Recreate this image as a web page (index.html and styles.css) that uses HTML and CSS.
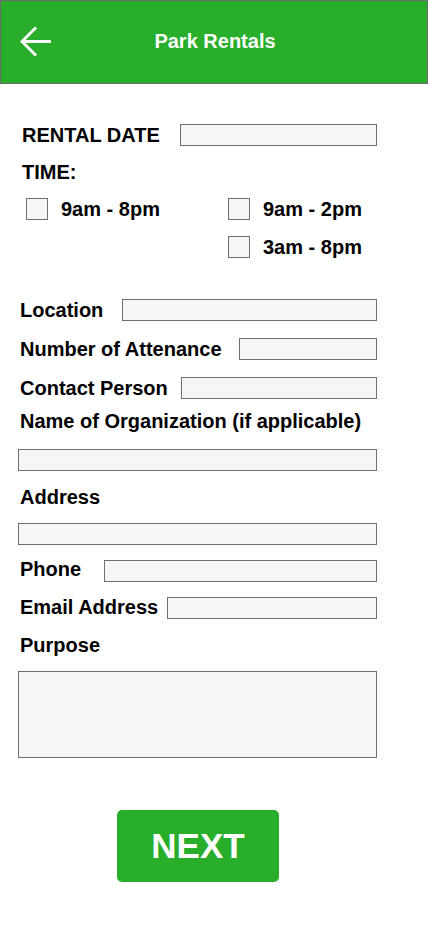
FILE: index.html
```html
<!DOCTYPE html>
<html lang="en">
<head>
<meta charset="utf-8">
<title>Park Rentals</title>
<link rel="stylesheet" href="styles.css">
</head>
<body>
<header class="topbar">
  <svg class="back" width="32" height="32" viewBox="0 0 32 32" aria-hidden="true">
    <path d="M16 1.5 L2 15.5 L16 29.5 M2 15.5 H31" fill="none" stroke="#fff" stroke-width="3" stroke-linejoin="miter"/>
  </svg>
  <h1 class="title">Park Rentals</h1>
</header>

<form class="form">
  <div class="row row-top">
    <span class="label label-caps">RENTAL DATE</span>
    <span class="field w-rental"></span>
  </div>
  <div class="row row-top">
    <span class="label label-caps">TIME:</span>
  </div>
  <div class="times">
    <label class="opt"><span class="box"></span>9am - 8pm</label>
    <label class="opt"><span class="box"></span>9am - 2pm</label>
    <label class="opt opt-right"><span class="box"></span>3am - 8pm</label>
  </div>

  <div class="row mt-location">
    <span class="label">Location</span>
    <span class="field w-location"></span>
  </div>
  <div class="row mt-2">
    <span class="label">Number of Attenance</span>
    <span class="field w-number"></span>
  </div>
  <div class="row mt-2">
    <span class="label">Contact Person</span>
    <span class="field w-contact"></span>
  </div>
  <div class="row mt-org">
    <span class="label">Name of Organization (if applicable)</span>
  </div>
  <div class="row mt-2">
    <span class="field w-full"></span>
  </div>
  <div class="row">
    <span class="label">Address</span>
  </div>
  <div class="row">
    <span class="field w-full"></span>
  </div>
  <div class="row">
    <span class="label lift-2">Phone</span>
    <span class="field w-phone"></span>
  </div>
  <div class="row">
    <span class="label lift-1">Email Address</span>
    <span class="field w-email"></span>
  </div>
  <div class="row">
    <span class="label">Purpose</span>
  </div>
  <div class="area"></div>

  <div class="actions">
    <button type="button" class="next">NEXT</button>
  </div>
</form>
</body>
</html>
```

FILE: styles.css
```css
* {
  box-sizing: border-box;
}

html, body {
  margin: 0;
  padding: 0;
  background: #ffffff;
}

body {
  width: 428px;
  font-family: "Liberation Sans", Arial, sans-serif;
  color: #000;
}

.topbar {
  height: 84px;
  background: #28ae2b;
  border: 1px solid #6b6b6b;
  display: flex;
  align-items: center;
  justify-content: center;
  position: relative;
}

.back {
  position: absolute;
  left: 19px;
  top: 25px;
}

.title {
  margin: 0 0 2px 2px;
  font-size: 20px;
  font-weight: bold;
  color: #fff;
}

.form {
  display: flex;
  flex-direction: column;
  gap: 15px;
  padding: 40px 51px 0 18px;
}

.row {
  height: 22px;
  display: flex;
  align-items: center;
  justify-content: space-between;
}

.row-top {
  padding-left: 4px;
}

.label {
  font-size: 20px;
  font-weight: bold;
  line-height: 22px;
  padding-left: 2px;
  white-space: nowrap;
}

.label-caps {
  padding-left: 0;
}

.lift-2 {
  margin-bottom: 4px;
}

.lift-1 {
  margin-bottom: 2px;
}

.field {
  display: block;
  height: 22px;
  background: #f6f6f6;
  border: 1px solid #707070;
}

.w-rental { width: 197px; }
.w-location { width: 255px; }
.w-number { width: 138px; }
.w-contact { width: 196px; }
.w-phone { width: 273px; }
.w-email { width: 210px; }
.w-full { width: 359px; }

.times {
  display: grid;
  grid-template-columns: 202px 1fr;
  row-gap: 16px;
  padding-left: 8px;
}

.opt {
  display: flex;
  align-items: center;
  gap: 13px;
  height: 22px;
  font-size: 20px;
  font-weight: bold;
  white-space: nowrap;
}

.opt-right {
  grid-column: 2;
}

.box {
  width: 22px;
  height: 22px;
  flex: none;
  background: #f6f6f6;
  border: 1px solid #707070;
}

.mt-location { margin-top: 26px; }
.mt-2 { margin-top: 2px; }
.mt-org { margin-top: -4px; }

.area {
  width: 359px;
  height: 87px;
  background: #f6f6f6;
  border: 1px solid #707070;
}

.actions {
  margin-top: 37px;
  padding-left: 99px;
}

.next {
  width: 162px;
  height: 72px;
  border: none;
  border-radius: 5px;
  background: #28ae2b;
  color: #fff;
  font-family: "Liberation Sans", Arial, sans-serif;
  font-size: 35px;
  font-weight: bold;
  padding: 0;
  cursor: pointer;
}
```
